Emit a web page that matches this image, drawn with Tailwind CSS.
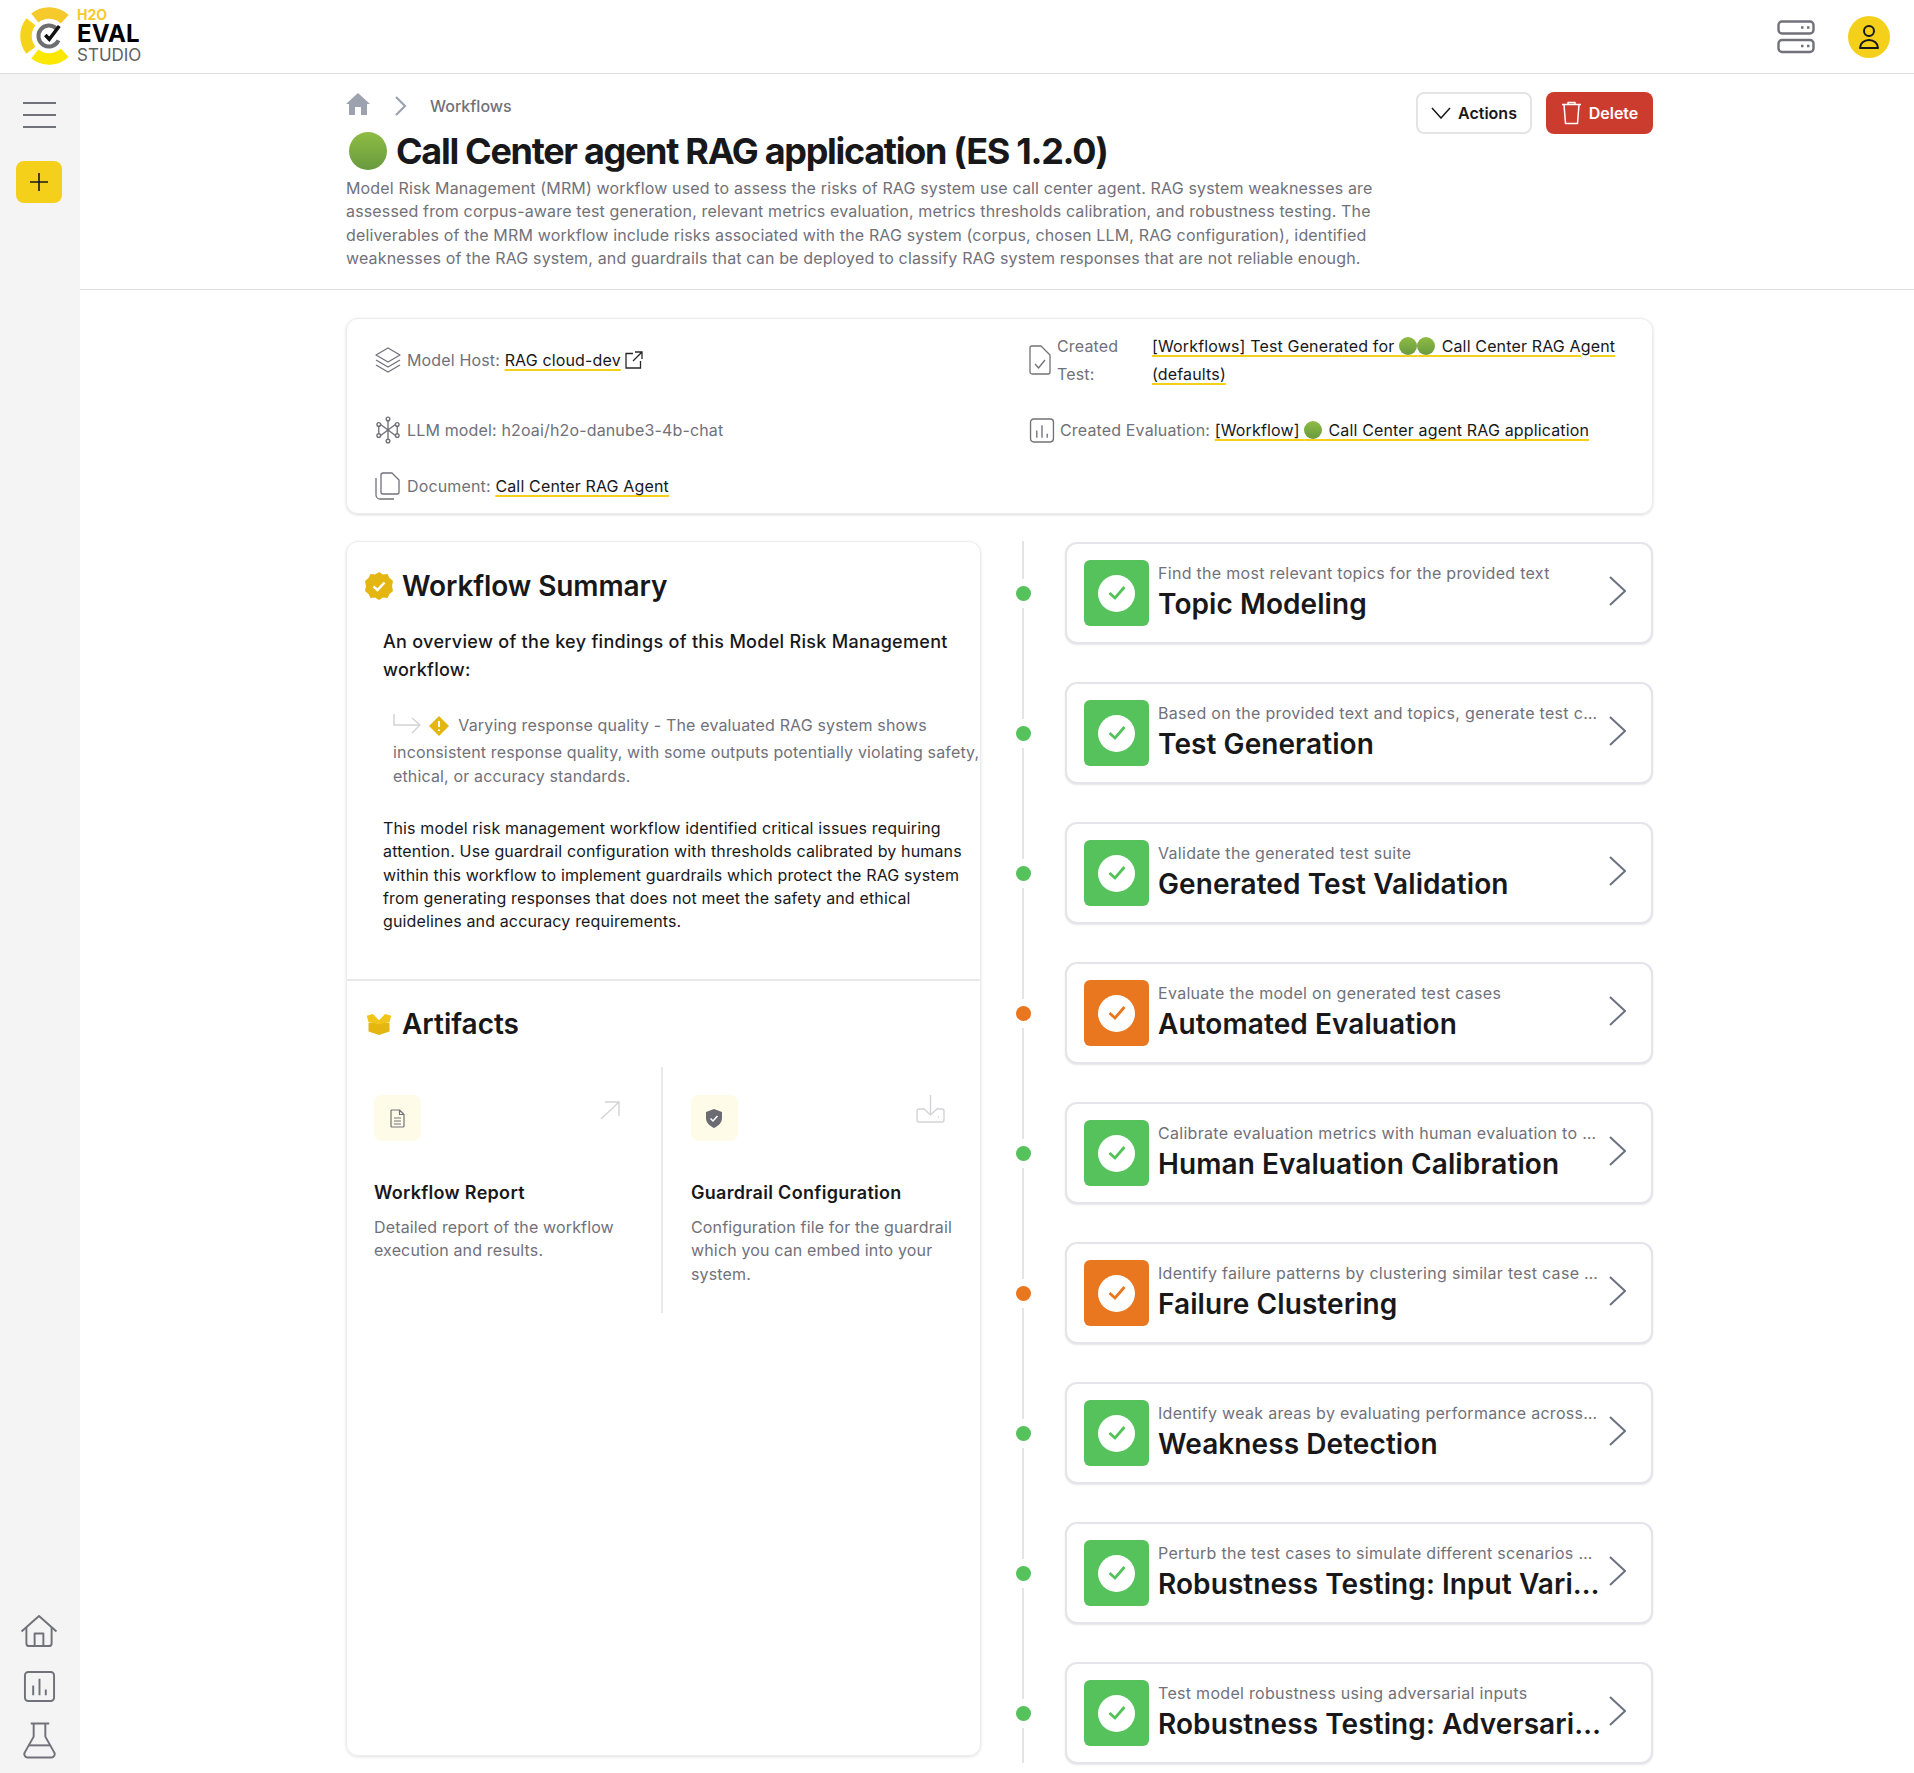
<!DOCTYPE html>
<html lang="en">
<head>
  <meta charset="UTF-8" />
  <title>Call Center agent RAG application | H2O Eval Studio</title>
  <script src="https://cdn.jsdelivr.net/npm/@tailwindcss/browser@4"></script>
</head>
<body class="w-[1914px] h-[1773px] overflow-hidden bg-white font-[Inter,sans-serif] text-[#18181b]">

  <!-- Top bar -->
  <header class="h-[74px] border-b border-[#dedee1] flex items-center justify-between pl-[20px] pr-[24px]">
    <div class="flex items-center -mt-[2px]">
      <svg class="w-[60px] h-[60px]" viewBox="0 0 60 60" fill="none" stroke-width="11.500">
        <path d="M14.800 11.900 A23 23 0 0 1 44.700 13.200" stroke="#f6c92c"/>
        <path d="M10.900 15.800 A23 23 0 0 0 10.900 44.200" stroke="#f5d31c"/>
        <path d="M14.800 48.100 A23 23 0 0 0 44.700 46.800" stroke="#fbe700"/>
        <path d="M36.400 22.600 A10.500 10.500 0 1 0 38.500 34.400" stroke="#6e6e70" stroke-width="4"/>
        <path d="M25.300 29 L29.300 33.300 L39.300 20" stroke="#111" stroke-width="3.500"/>
      </svg>
      <div class="-ml-[3px] flex flex-col leading-none">
        <span class="text-[14px] font-bold text-[#f6c92c] h-[14px]">H2O</span>
        <span class="text-[24px] font-bold text-black h-[24px] leading-[24px] tracking-[0.2px]">EVAL</span>
        <span class="text-[17px] text-[#616161] h-[18px] leading-[18px]">STUDIO</span>
      </div>
    </div>
    <div class="flex items-center gap-[33px]">
      <svg class="w-[38px] h-[34px]" viewBox="0 0 38 34" fill="none" stroke="#71717a" stroke-width="2.400">
        <rect x="1.500" y="1.500" width="35" height="12" rx="3.500"/>
        <rect x="1.500" y="20" width="35" height="12" rx="3.500"/>
        <path d="M24 7.500h2.500M30 7.500h2.500M24 26h2.500M30 26h2.500"/>
      </svg>
      <div class="w-[42px] h-[42px] rounded-full bg-[#f4d01a] flex items-center justify-center">
        <svg class="w-[24px] h-[26px]" viewBox="0 0 24 26" fill="none" stroke="#18181b" stroke-width="2">
          <circle cx="12" cy="7" r="5"/>
          <path d="M3 24 a9 8 0 0 1 18 0 Z" stroke-linejoin="round"/>
        </svg>
      </div>
    </div>
  </header>

  <div class="flex h-[1699px]">
    <!-- Sidebar -->
    <aside class="w-[80px] bg-[#f4f4f5] flex flex-col items-center pt-[28px] pb-[14px] pr-[2px]">
      <div class="w-[33px] flex flex-col gap-[10px]">
        <div class="h-[2px] bg-[#71717a]"></div>
        <div class="h-[2px] bg-[#71717a]"></div>
        <div class="h-[2px] bg-[#71717a]"></div>
      </div>
      <div class="mt-[33px] w-[46px] h-[42px] rounded-lg bg-[#f4d01a] flex items-center justify-center">
        <svg class="w-[20px] h-[20px]" viewBox="0 0 20 20" stroke="#18181b" stroke-width="1.600"><path d="M10 1v18M1 10h18"/></svg>
      </div>
      <div class="mt-auto flex flex-col items-center">
        <svg class="w-[38px] h-[33px]" viewBox="0 0 38 34" fill="none" stroke="#71717a" stroke-width="2" stroke-linejoin="round">
          <path d="M1 17 L19 1 L37 17"/>
          <path d="M6 13 V29 a3 3 0 0 0 3 3 H29 a3 3 0 0 0 3 -3 V13"/>
          <path d="M14.500 32 V19 H23.500 V32"/>
        </svg>
        <svg class="mt-[22px] w-[33px] h-[33px]" viewBox="0 0 34 34" fill="none" stroke="#71717a" stroke-width="2">
          <rect x="2" y="2" width="30" height="30" rx="3.500"/>
          <path d="M10.500 16 V26 M17 9 V26 M23.500 20 V26"/>
        </svg>
        <svg class="mt-[19px] w-[33px] h-[37px]" viewBox="0 0 34 38" fill="none" stroke="#71717a" stroke-width="2" stroke-linejoin="round">
          <path d="M8 1.500 H27 M11 1.500 V15 L2 31 a3.500 3.500 0 0 0 3 5.500 H29 a3.500 3.500 0 0 0 3 -5.500 L23 15 V1.500"/>
          <path d="M6 24 H28"/>
        </svg>
      </div>
    </aside>

    <main class="flex-1 min-w-0">
      <!-- Page head -->
      <section class="h-[216px] border-b border-[#dedee1] pl-[266px] pr-[261px] flex justify-between">
        <div class="w-[1040px]">
          <div class="flex items-center h-[42px] pt-[21px]">
            <svg class="-mt-[4px] w-[24px] h-[22px]" viewBox="0 0 24 22" fill="#9ca3af"><path d="M12 0 L24 11 H21 V22 H15 V14 H9 V22 H3 V11 H0 Z"/></svg>
            <svg class="ml-[24px] w-[13px] h-[20px]" viewBox="0 0 13 20" fill="none" stroke="#9ca3af" stroke-width="2.200"><path d="M2 1 L11 10 L2 19"/></svg>
            <span class="ml-[23px] text-[16px] font-medium text-[#71717a]">Workflows</span>
          </div>
          <h1 class="mt-[7px] flex items-center h-[56px] text-[36px] font-bold tracking-[-1.300px] text-[#18181b] whitespace-nowrap">
            <span class="ml-[3px] mr-[9px] w-[38px] h-[38px] rounded-full bg-gradient-to-b from-[#8fbc43] to-[#689a3f]"></span>
            Call Center agent RAG application (ES 1.2.0)
          </h1>
          <p class="text-[16px] tracking-[0.15px] leading-[23.4px] text-[#71717a] -mt-[2px]">Model Risk Management (MRM) workflow used to assess the risks of RAG system use call center agent. RAG system weaknesses are assessed from corpus-aware test generation, relevant metrics evaluation, metrics thresholds calibration, and robustness testing. The deliverables of the MRM workflow include risks associated with the RAG system (corpus, chosen LLM, RAG configuration), identified weaknesses of the RAG system, and guardrails that can be deployed to classify RAG system responses that are not reliable enough.</p>
        </div>
        <div class="flex gap-[14px] pt-[18px]">
          <button class="w-[116px] h-[42px] border-2 border-[#e4e4e7] rounded-lg flex items-center justify-center gap-[7px] text-[16px] font-semibold">
            <svg class="w-[20px] h-[12px]" viewBox="0 0 20 12" fill="none" stroke="#18181b" stroke-width="1.500"><path d="M1 1 L10 11 L19 1"/></svg>
            Actions
          </button>
          <button class="w-[107px] h-[42px] rounded-lg bg-[#cb3c2e] flex items-center justify-center gap-[7px] text-[16px] font-semibold text-white">
            <svg class="w-[21px] h-[24px]" viewBox="0 0 21 24" fill="none" stroke="#fff" stroke-width="1.500" stroke-linejoin="round">
              <path d="M1 3.500 H20 M7 3.500 V1.500 H14 V3.500"/>
              <path d="M3 3.500 L4.500 22.500 H16.500 L18 3.500"/>
            </svg>
            Delete
          </button>
        </div>
      </section>

      <div class="pl-[266px] pr-[261px]">
        <!-- Info card -->
        <section class="mt-[28px] h-[196px] rounded-xl border border-[#ececee] shadow-[0_1px_3px_rgba(0,0,0,0.15)] grid grid-cols-[682px_1fr] text-[16px] tracking-[0.15px] text-[#71717a]">
          <div class="pl-[28px]">
            <div class="flex items-center h-[80px] pt-[1px]">
              <svg class="w-[26px] h-[26px] mr-[6px]" viewBox="0 0 26 26" fill="none" stroke="#71717a" stroke-width="1.300" stroke-linejoin="round">
                <path d="M13 1 L25 8 L13 15 L1 8 Z"/>
                <path d="M1 13 L13 20 L25 13"/>
                <path d="M1 18 L13 25 L25 18"/>
              </svg>
              Model Host:&nbsp;<a class="text-[#18181b] underline decoration-[#f4d01a] decoration-2 underline-offset-3">RAG cloud-dev</a>
              <svg class="ml-[4px] w-[18px] h-[18px]" viewBox="0 0 18 18" fill="none" stroke="#27272a" stroke-width="1.300"><path d="M8 2.500 H1 V17 H15.500 V10 M10 1 H17 V8 M17 1 L8 10"/></svg>
            </div>
            <div class="flex items-center h-[28px] mt-[17px]">
              <svg class="ml-[1px] w-[24px] h-[30px] mr-[7px]" viewBox="0 0 26 30" fill="none" stroke="#71717a" stroke-width="1.500">
                <circle cx="13" cy="3" r="2"/><circle cx="13" cy="27" r="2"/>
                <circle cx="3" cy="9" r="2"/><circle cx="23" cy="9" r="2"/><circle cx="3" cy="21" r="2"/><circle cx="23" cy="21" r="2"/>
                <path d="M13 5 V25 M5 9 L21 21 M21 9 L5 21 M3 11 V19 M23 11 V19"/>
              </svg>
              LLM model: h2oai/h2o-danube3-4b-chat
            </div>
            <div class="flex items-center h-[28px] mt-[28px]">
              <svg class="w-[26px] h-[28px] mr-[6px]" viewBox="0 0 26 28" fill="none" stroke="#71717a" stroke-width="1.300" stroke-linejoin="round">
                <path d="M6 3 a2 2 0 0 1 2 -2 H17 L24 8 V20 a2 2 0 0 1 -2 2 H8 a2 2 0 0 1 -2 -2 Z"/>
                <path d="M1 6 V23 a4 4 0 0 0 4 4 H19"/>
              </svg>
              Document:&nbsp;<a class="text-[#18181b] underline decoration-[#f4d01a] decoration-2 underline-offset-3">Call Center RAG Agent</a>
            </div>
          </div>
          <div>
            <div class="flex items-center h-[80px] pt-[1px]">
              <svg class="w-[22px] h-[30px] shrink-0 mr-[6px]" viewBox="0 0 22 30" fill="none" stroke="#71717a" stroke-width="1.300" stroke-linejoin="round">
                <path d="M1 3 a2 2 0 0 1 2 -2 H12 L21 10 V27 a2 2 0 0 1 -2 2 H3 a2 2 0 0 1 -2 -2 Z"/>
                <path d="M6 19 L9.500 23 L16 15"/>
              </svg>
              <span class="w-[95px] shrink-0 leading-[28px]">Created<br>Test:</span>
              <a class="w-[490px] leading-[28px] text-[#18181b] underline decoration-[#f4d01a] decoration-2 underline-offset-3">[Workflows] Test Generated for <span class="relative tracking-[14px]">&nbsp;<span class="absolute left-0 top-[1px] w-[18px] h-[18px] rounded-full bg-gradient-to-b from-[#8fbc43] to-[#689a3f]"></span></span><span class="relative tracking-[15px]">&nbsp;<span class="absolute left-0 top-[1px] w-[18px] h-[18px] rounded-full bg-gradient-to-b from-[#8fbc43] to-[#689a3f]"></span></span> Call Center RAG Agent (defaults)</a>
            </div>
            <div class="flex items-center h-[28px] mt-[17px]">
              <svg class="w-[26px] h-[25px] mr-[5px]" viewBox="0 0 24 24" fill="none" stroke="#71717a" stroke-width="1.300">
                <rect x="1" y="1" width="22" height="22" rx="3"/>
                <path d="M7 12 V19 M12 7 V19 M17 15 V19"/>
              </svg>
              Created Evaluation:&nbsp;<a class="text-[#18181b] underline decoration-[#f4d01a] decoration-2 underline-offset-3">[Workflow] <span class="relative tracking-[15px]">&nbsp;<span class="absolute left-0 top-[1px] w-[18px] h-[18px] rounded-full bg-gradient-to-b from-[#8fbc43] to-[#689a3f]"></span></span> Call Center agent RAG application</a>
            </div>
          </div>
        </section>

        <div class="mt-[27px] flex">
          <!-- Left panel -->
          <section class="w-[635px] h-[1215px] shrink-0 rounded-xl border border-[#ececee] shadow-[0_1px_3px_rgba(0,0,0,0.12)]">
            <div class="h-[439px] border-b-2 border-[#e9e9eb] overflow-hidden">
              <h2 class="mt-[25px] ml-[18px] flex items-center gap-[9px] h-[38px] text-[28px] tracking-[-0.1px] font-semibold">
                <svg class="w-[28px] h-[28px]" viewBox="0 0 28 28">
                  <path d="M14 0 L18 2.500 L22.500 2 L24.500 6 L28 9 L27 14 L28 19 L24.500 22 L22.500 26 L18 25.500 L14 28 L10 25.500 L5.500 26 L3.500 22 L0 19 L1 14 L0 9 L3.500 6 L5.500 2 L10 2.500 Z" fill="#e3b611"/>
                  <path d="M8.500 14.500 L12.500 18 L19.500 10.500" fill="none" stroke="#fff" stroke-width="2.500"/>
                </svg>
                Workflow Summary
              </h2>
              <p class="mt-[23px] ml-[36px] w-[590px] text-[18px] tracking-[0.3px] font-medium leading-[28px]">An overview of the key findings of this Model Risk Management workflow:</p>
              <p class="mt-[29px] ml-[46px] w-[592px] text-[16px] tracking-[0.15px] leading-[24.4px] text-[#71717a]">
                <span class="inline-block w-0 h-[20px] align-[-9px]"></span><svg class="inline-block align-[-4px] w-[28px] h-[22px]" viewBox="0 0 28 22" fill="none" stroke="#d4d4d8" stroke-width="1.500"><path d="M1 1 V12 H26 M19 5 L27 12 L19 20"/></svg>
                <svg class="inline-block align-[-5px] ml-[3px] w-[20px] h-[20px] mr-[5px]" viewBox="0 0 20 20"><path d="M10 0 L20 10 L10 20 L0 10 Z" fill="#e3b611"/><path d="M10 5 V11 M10 13.500 V15" stroke="#fff" stroke-width="2"/></svg>
                Varying response quality - The evaluated RAG system shows inconsistent response quality, with some outputs potentially violating safety, ethical, or accuracy standards.
              </p>
              <p class="mt-[28px] ml-[36px] w-[588px] text-[16px] tracking-[0.15px] leading-[23.4px]">This model risk management workflow identified critical issues requiring attention. Use guardrail configuration with thresholds calibrated by humans within this workflow to implement guardrails which protect the RAG system from generating responses that does not meet the safety and ethical guidelines and accuracy requirements.</p>
            </div>
            <h2 class="mt-[24px] ml-[18px] flex items-center gap-[9px] h-[38px] text-[28px] font-semibold">
              <svg class="w-[28px] h-[21px]" viewBox="0 0 28 24">
                <path d="M2 10 H26 V20 L14 24 L2 20 Z" fill="#e3b611"/>
                <path d="M0 2 L7 0 L14 7 L21 0 L28 2 L26 9 L14 12 L2 9 Z" fill="#f0c419"/>
              </svg>
              Artifacts
            </h2>
            <div class="mt-[24px] flex h-[246px]">
              <div class="w-[316px] border-r-2 border-[#e9e9eb] pl-[27px] pr-[47px] pt-[28px]">
                <div class="flex justify-between items-start">
                  <div class="w-[47px] h-[46px] rounded-lg bg-[#fefce8] flex items-center justify-center">
                    <svg class="w-[15px] h-[19px]" viewBox="0 0 15 19" fill="none" stroke="#71717a" stroke-width="1.200" stroke-linejoin="round"><path d="M1 2 a1 1 0 0 1 1 -1 H9.500 L14 5.500 V17 a1 1 0 0 1 -1 1 H2 a1 1 0 0 1 -1 -1 Z M9.500 1 V5.500 H14 M4 9 H11 M4 12 H11 M4 15 H11"/></svg>
                  </div>
                  <svg class="mt-[6px] -mr-[6px] w-[20px] h-[19px]" viewBox="0 0 20 19" fill="none" stroke="#d4d4d8" stroke-width="1.400"><path d="M1 18 L19 1 M5 1 H19 V15"/></svg>
                </div>
                <h3 class="mt-[38px] text-[18px] tracking-[0.3px] font-semibold leading-[28px]">Workflow Report</h3>
                <p class="mt-[9px] -mr-[10px] text-[16px] tracking-[0.15px] leading-[23.4px] text-[#71717a]">Detailed report of the workflow execution and results.</p>
              </div>
              <div class="flex-1 pl-[28px] pr-[35px] pt-[28px]">
                <div class="flex justify-between items-start">
                  <div class="w-[47px] h-[46px] rounded-lg bg-[#fefce8] flex items-center justify-center">
                    <svg class="-ml-[1px] w-[18px] h-[19px]" viewBox="0 0 18 19"><path d="M9 0 L17 3 V9 C17 14 13 17 9 19 C5 17 1 14 1 9 V3 Z" fill="#6b6b72"/><path d="M5.500 9.500 L8 12 L12.500 7" fill="none" stroke="#fff" stroke-width="1.500"/></svg>
                  </div>
                  <svg class="w-[29px] h-[28px]" viewBox="0 0 29 28" fill="none" stroke="#d4d4d8" stroke-width="1.400"><path d="M14.500 0 V20 M7 13 L14.500 20 L22 13 M8 14 H3 A2 2 0 0 0 1 16 V25 A2 2 0 0 0 3 27 H26 A2 2 0 0 0 28 25 V16 A2 2 0 0 0 26 14 H21 M22 22 H23"/></svg>
                </div>
                <h3 class="mt-[38px] text-[18px] tracking-[0.3px] font-semibold leading-[28px]">Guardrail Configuration</h3>
                <p class="mt-[9px] -mr-[14px] text-[16px] tracking-[0.15px] leading-[23.4px] text-[#71717a]">Configuration file for the guardrail which you can embed into your system.</p>
              </div>
            </div>
          </section>

          <!-- Step timeline -->
          <section class="relative flex-1 flex flex-col gap-[38px] pt-[1px] pb-[30px]">
            <div class="absolute left-[41px] top-0 h-[1222px] w-[2px] bg-[#e4e4e7]"></div>

            <div class="relative flex items-center h-[102px]">
              <div class="w-[84px] flex justify-center"><div class="w-[15px] h-[15px] rounded-full bg-[#55c25c] ring-[7px] ring-white"></div></div>
              <div class="w-[588px] h-[102px] rounded-xl border-2 border-[#e4e4ea] shadow-[0_1px_2px_rgba(0,0,0,0.1)] flex items-center pl-[17px] bg-white">
                <div class="w-[65px] h-[66px] shrink-0 rounded-md bg-[#55c25c] flex items-center justify-center">
                  <div class="w-[37px] h-[37px] rounded-full bg-white flex items-center justify-center"><svg class="w-[18px] h-[16px]" viewBox="0 0 18 16" fill="none" stroke="#55c25c" stroke-width="2.800"><path d="M1.500 8 L7 13 L16.500 2"/></svg></div>
                </div>
                <div class="ml-[9px] w-[440px] min-w-0 pb-[4px]">
                  <p class="truncate text-[16px] tracking-[0.3px] leading-[24px] text-[#71717a]">Find the most relevant topics for the provided text</p>
                  <p class="mt-[1px] w-[446px] truncate text-[28px] tracking-[0.08px] font-semibold leading-[36px] text-[#18181b]">Topic Modeling</p>
                </div>
                <svg class="ml-[11px] -mt-[4px] w-[17px] h-[30px]" viewBox="0 0 17 30" fill="none" stroke="#6b7280" stroke-width="2"><path d="M1 1 L16 15 L1 29"/></svg>
              </div>
            </div>

            <div class="relative flex items-center h-[102px]">
              <div class="w-[84px] flex justify-center"><div class="w-[15px] h-[15px] rounded-full bg-[#55c25c] ring-[7px] ring-white"></div></div>
              <div class="w-[588px] h-[102px] rounded-xl border-2 border-[#e4e4ea] shadow-[0_1px_2px_rgba(0,0,0,0.1)] flex items-center pl-[17px] bg-white">
                <div class="w-[65px] h-[66px] shrink-0 rounded-md bg-[#55c25c] flex items-center justify-center">
                  <div class="w-[37px] h-[37px] rounded-full bg-white flex items-center justify-center"><svg class="w-[18px] h-[16px]" viewBox="0 0 18 16" fill="none" stroke="#55c25c" stroke-width="2.800"><path d="M1.500 8 L7 13 L16.500 2"/></svg></div>
                </div>
                <div class="ml-[9px] w-[440px] min-w-0 pb-[4px]">
                  <p class="truncate text-[16px] tracking-[0.3px] leading-[24px] text-[#71717a]">Based on the provided text and topics, generate test cases</p>
                  <p class="mt-[1px] w-[446px] truncate text-[28px] tracking-[0.08px] font-semibold leading-[36px] text-[#18181b]">Test Generation</p>
                </div>
                <svg class="ml-[11px] -mt-[4px] w-[17px] h-[30px]" viewBox="0 0 17 30" fill="none" stroke="#6b7280" stroke-width="2"><path d="M1 1 L16 15 L1 29"/></svg>
              </div>
            </div>

            <div class="relative flex items-center h-[102px]">
              <div class="w-[84px] flex justify-center"><div class="w-[15px] h-[15px] rounded-full bg-[#55c25c] ring-[7px] ring-white"></div></div>
              <div class="w-[588px] h-[102px] rounded-xl border-2 border-[#e4e4ea] shadow-[0_1px_2px_rgba(0,0,0,0.1)] flex items-center pl-[17px] bg-white">
                <div class="w-[65px] h-[66px] shrink-0 rounded-md bg-[#55c25c] flex items-center justify-center">
                  <div class="w-[37px] h-[37px] rounded-full bg-white flex items-center justify-center"><svg class="w-[18px] h-[16px]" viewBox="0 0 18 16" fill="none" stroke="#55c25c" stroke-width="2.800"><path d="M1.500 8 L7 13 L16.500 2"/></svg></div>
                </div>
                <div class="ml-[9px] w-[440px] min-w-0 pb-[4px]">
                  <p class="truncate text-[16px] tracking-[0.3px] leading-[24px] text-[#71717a]">Validate the generated test suite</p>
                  <p class="mt-[1px] w-[446px] truncate text-[28px] tracking-[0.08px] font-semibold leading-[36px] text-[#18181b]">Generated Test Validation</p>
                </div>
                <svg class="ml-[11px] -mt-[4px] w-[17px] h-[30px]" viewBox="0 0 17 30" fill="none" stroke="#6b7280" stroke-width="2"><path d="M1 1 L16 15 L1 29"/></svg>
              </div>
            </div>

            <div class="relative flex items-center h-[102px]">
              <div class="w-[84px] flex justify-center"><div class="w-[15px] h-[15px] rounded-full bg-[#e8771f] ring-[7px] ring-white"></div></div>
              <div class="w-[588px] h-[102px] rounded-xl border-2 border-[#e4e4ea] shadow-[0_1px_2px_rgba(0,0,0,0.1)] flex items-center pl-[17px] bg-white">
                <div class="w-[65px] h-[66px] shrink-0 rounded-md bg-[#e8771f] flex items-center justify-center">
                  <div class="w-[37px] h-[37px] rounded-full bg-white flex items-center justify-center"><svg class="w-[18px] h-[16px]" viewBox="0 0 18 16" fill="none" stroke="#e8771f" stroke-width="2.800"><path d="M1.500 8 L7 13 L16.500 2"/></svg></div>
                </div>
                <div class="ml-[9px] w-[440px] min-w-0 pb-[4px]">
                  <p class="truncate text-[16px] tracking-[0.3px] leading-[24px] text-[#71717a]">Evaluate the model on generated test cases</p>
                  <p class="mt-[1px] w-[446px] truncate text-[28px] tracking-[0.08px] font-semibold leading-[36px] text-[#18181b]">Automated Evaluation</p>
                </div>
                <svg class="ml-[11px] -mt-[4px] w-[17px] h-[30px]" viewBox="0 0 17 30" fill="none" stroke="#6b7280" stroke-width="2"><path d="M1 1 L16 15 L1 29"/></svg>
              </div>
            </div>

            <div class="relative flex items-center h-[102px]">
              <div class="w-[84px] flex justify-center"><div class="w-[15px] h-[15px] rounded-full bg-[#55c25c] ring-[7px] ring-white"></div></div>
              <div class="w-[588px] h-[102px] rounded-xl border-2 border-[#e4e4ea] shadow-[0_1px_2px_rgba(0,0,0,0.1)] flex items-center pl-[17px] bg-white">
                <div class="w-[65px] h-[66px] shrink-0 rounded-md bg-[#55c25c] flex items-center justify-center">
                  <div class="w-[37px] h-[37px] rounded-full bg-white flex items-center justify-center"><svg class="w-[18px] h-[16px]" viewBox="0 0 18 16" fill="none" stroke="#55c25c" stroke-width="2.800"><path d="M1.500 8 L7 13 L16.500 2"/></svg></div>
                </div>
                <div class="ml-[9px] w-[440px] min-w-0 pb-[4px]">
                  <p class="truncate text-[16px] tracking-[0.3px] leading-[24px] text-[#71717a]">Calibrate evaluation metrics with human evaluation to set thresholds</p>
                  <p class="mt-[1px] w-[446px] truncate text-[28px] tracking-[0.08px] font-semibold leading-[36px] text-[#18181b]">Human Evaluation Calibration</p>
                </div>
                <svg class="ml-[11px] -mt-[4px] w-[17px] h-[30px]" viewBox="0 0 17 30" fill="none" stroke="#6b7280" stroke-width="2"><path d="M1 1 L16 15 L1 29"/></svg>
              </div>
            </div>

            <div class="relative flex items-center h-[102px]">
              <div class="w-[84px] flex justify-center"><div class="w-[15px] h-[15px] rounded-full bg-[#e8771f] ring-[7px] ring-white"></div></div>
              <div class="w-[588px] h-[102px] rounded-xl border-2 border-[#e4e4ea] shadow-[0_1px_2px_rgba(0,0,0,0.1)] flex items-center pl-[17px] bg-white">
                <div class="w-[65px] h-[66px] shrink-0 rounded-md bg-[#e8771f] flex items-center justify-center">
                  <div class="w-[37px] h-[37px] rounded-full bg-white flex items-center justify-center"><svg class="w-[18px] h-[16px]" viewBox="0 0 18 16" fill="none" stroke="#e8771f" stroke-width="2.800"><path d="M1.500 8 L7 13 L16.500 2"/></svg></div>
                </div>
                <div class="ml-[9px] w-[440px] min-w-0 pb-[4px]">
                  <p class="truncate text-[16px] tracking-[0.3px] leading-[24px] text-[#71717a]">Identify failure patterns by clustering similar test case failures</p>
                  <p class="mt-[1px] w-[446px] truncate text-[28px] tracking-[0.08px] font-semibold leading-[36px] text-[#18181b]">Failure Clustering</p>
                </div>
                <svg class="ml-[11px] -mt-[4px] w-[17px] h-[30px]" viewBox="0 0 17 30" fill="none" stroke="#6b7280" stroke-width="2"><path d="M1 1 L16 15 L1 29"/></svg>
              </div>
            </div>

            <div class="relative flex items-center h-[102px]">
              <div class="w-[84px] flex justify-center"><div class="w-[15px] h-[15px] rounded-full bg-[#55c25c] ring-[7px] ring-white"></div></div>
              <div class="w-[588px] h-[102px] rounded-xl border-2 border-[#e4e4ea] shadow-[0_1px_2px_rgba(0,0,0,0.1)] flex items-center pl-[17px] bg-white">
                <div class="w-[65px] h-[66px] shrink-0 rounded-md bg-[#55c25c] flex items-center justify-center">
                  <div class="w-[37px] h-[37px] rounded-full bg-white flex items-center justify-center"><svg class="w-[18px] h-[16px]" viewBox="0 0 18 16" fill="none" stroke="#55c25c" stroke-width="2.800"><path d="M1.500 8 L7 13 L16.500 2"/></svg></div>
                </div>
                <div class="ml-[9px] w-[440px] min-w-0 pb-[4px]">
                  <p class="truncate text-[16px] tracking-[0.3px] leading-[24px] text-[#71717a]">Identify weak areas by evaluating performance across topics</p>
                  <p class="mt-[1px] w-[446px] truncate text-[28px] tracking-[0.08px] font-semibold leading-[36px] text-[#18181b]">Weakness Detection</p>
                </div>
                <svg class="ml-[11px] -mt-[4px] w-[17px] h-[30px]" viewBox="0 0 17 30" fill="none" stroke="#6b7280" stroke-width="2"><path d="M1 1 L16 15 L1 29"/></svg>
              </div>
            </div>

            <div class="relative flex items-center h-[102px]">
              <div class="w-[84px] flex justify-center"><div class="w-[15px] h-[15px] rounded-full bg-[#55c25c] ring-[7px] ring-white"></div></div>
              <div class="w-[588px] h-[102px] rounded-xl border-2 border-[#e4e4ea] shadow-[0_1px_2px_rgba(0,0,0,0.1)] flex items-center pl-[17px] bg-white">
                <div class="w-[65px] h-[66px] shrink-0 rounded-md bg-[#55c25c] flex items-center justify-center">
                  <div class="w-[37px] h-[37px] rounded-full bg-white flex items-center justify-center"><svg class="w-[18px] h-[16px]" viewBox="0 0 18 16" fill="none" stroke="#55c25c" stroke-width="2.800"><path d="M1.500 8 L7 13 L16.500 2"/></svg></div>
                </div>
                <div class="ml-[9px] w-[440px] min-w-0 pb-[4px]">
                  <p class="truncate text-[16px] tracking-[0.3px] leading-[24px] text-[#71717a]">Perturb the test cases to simulate different scenarios and inputs</p>
                  <p class="mt-[1px] w-[446px] truncate text-[28px] tracking-[0.08px] font-semibold leading-[36px] text-[#18181b]">Robustness Testing: Input Variations</p>
                </div>
                <svg class="ml-[11px] -mt-[4px] w-[17px] h-[30px]" viewBox="0 0 17 30" fill="none" stroke="#6b7280" stroke-width="2"><path d="M1 1 L16 15 L1 29"/></svg>
              </div>
            </div>

            <div class="relative flex items-center h-[102px]">
              <div class="w-[84px] flex justify-center"><div class="w-[15px] h-[15px] rounded-full bg-[#55c25c] ring-[7px] ring-white"></div></div>
              <div class="w-[588px] h-[102px] rounded-xl border-2 border-[#e4e4ea] shadow-[0_1px_2px_rgba(0,0,0,0.1)] flex items-center pl-[17px] bg-white">
                <div class="w-[65px] h-[66px] shrink-0 rounded-md bg-[#55c25c] flex items-center justify-center">
                  <div class="w-[37px] h-[37px] rounded-full bg-white flex items-center justify-center"><svg class="w-[18px] h-[16px]" viewBox="0 0 18 16" fill="none" stroke="#55c25c" stroke-width="2.800"><path d="M1.500 8 L7 13 L16.500 2"/></svg></div>
                </div>
                <div class="ml-[9px] w-[440px] min-w-0 pb-[4px]">
                  <p class="truncate text-[16px] tracking-[0.3px] leading-[24px] text-[#71717a]">Test model robustness using adversarial inputs</p>
                  <p class="mt-[1px] w-[446px] truncate text-[28px] tracking-[0.08px] font-semibold leading-[36px] text-[#18181b]">Robustness Testing: Adversarial Attacks</p>
                </div>
                <svg class="ml-[11px] -mt-[4px] w-[17px] h-[30px]" viewBox="0 0 17 30" fill="none" stroke="#6b7280" stroke-width="2"><path d="M1 1 L16 15 L1 29"/></svg>
              </div>
            </div>
          </section>
        </div>
      </div>
    </main>
  </div>
</body>
</html>
